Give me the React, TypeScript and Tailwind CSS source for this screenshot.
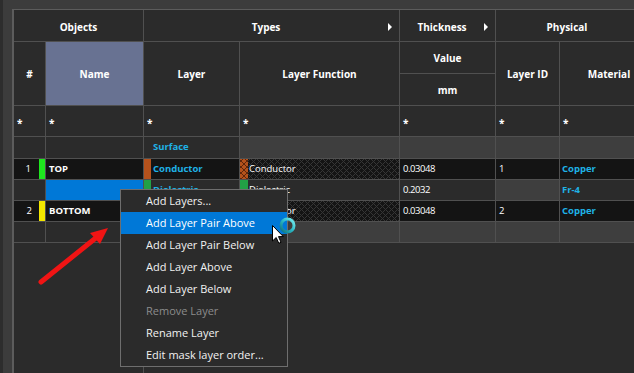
import React from 'react';

const checker =
  'bg-[#141414] bg-[repeating-linear-gradient(45deg,#363636_0px,#363636_1px,transparent_1px,transparent_4.25px),repeating-linear-gradient(-45deg,#363636_0px,#363636_1px,transparent_1px,transparent_4.25px)]';
const orangeChecker =
  'bg-[#b5521c] bg-[repeating-linear-gradient(45deg,#5e260b_0px,#5e260b_1px,transparent_1px,transparent_4.25px),repeating-linear-gradient(-45deg,#5e260b_0px,#5e260b_1px,transparent_1px,transparent_4.25px)]';

function Tri() {
  return <div className="w-0 h-0 border-y-[4px] border-y-transparent border-l-[4px] border-l-white mr-[7px] shrink-0" />;
}

function Hd({ children, className = '' }: { children?: React.ReactNode; className?: string }) {
  return (
    <div className={`flex items-center justify-center text-[10px] font-bold text-white bg-[#2b2b2b] whitespace-nowrap ${className}`}>
      {children}
    </div>
  );
}

function Star() {
  return <div className="bg-[#2b2b2b] flex items-center pl-[3px] pt-[4px] text-[10px] font-bold text-white">*</div>;
}

type CellProps = { children?: React.ReactNode; className?: string };
function C({ children, className = '' }: CellProps) {
  return <div className={`flex items-center min-w-0 overflow-hidden whitespace-nowrap ${className}`}>{children}</div>;
}

const cyan = 'text-[#1fb2e6] font-bold text-[9.5px]';
const num = 'text-white text-[9.5px] tracking-[-0.45px]';

export default function App() {
  const menu = [
    { t: 'Add Layers...' },
    { t: 'Add Layer Pair Above', hl: true },
    { t: 'Add Layer Pair Below' },
    { t: 'Add Layer Above' },
    { t: 'Add Layer Below' },
    { t: 'Remove Layer', dis: true },
    { t: 'Rename Layer' },
    { t: 'Edit mask layer order...' },
  ];
  return (
    <div className="relative w-[634px] h-[373px] overflow-hidden flex font-['Open_Sans','Noto_Sans',sans-serif]">
      <div className="w-[3px] bg-[#2d2d2d] shrink-0" />
      <div className="flex-1 min-w-0 bg-[#3c3c3c] pl-[9px] pt-[9px] flex flex-col">
        <div className="flex-1 min-h-0 flex flex-col bg-[#2b2b2b] border-l-2 border-t border-[#5c5c5c] overflow-hidden">
          <div className="grid grid-cols-[31px_97px_95px_159px_95px_63px_98px] grid-rows-[31px_31px_31px_30px_21px_20px_20px_20px_20px] gap-px bg-[#505050] pb-px w-max shrink-0">
            {/* header row 1 */}
            <Hd className="col-span-2 pt-[3px]">Objects</Hd>
            <Hd className="col-span-2 pt-[3px]">
              <span className="flex-1 text-center">Types</span>
              <Tri />
            </Hd>
            <Hd className="pt-[3px]">
              <span className="flex-1 text-center">Thickness</span>
              <Tri />
            </Hd>
            <Hd className="col-span-2 pt-[3px] pr-[20px]">Physical</Hd>
            {/* header rows 2-3 */}
            <Hd className="row-span-2 pt-[2px]">#</Hd>
            <Hd className="row-span-2 pt-[2px] !bg-[#687292]">Name</Hd>
            <Hd className="row-span-2 pt-[2px]">Layer</Hd>
            <Hd className="row-span-2 pt-[2px]">Layer Function</Hd>
            <Hd className="pt-[2px]">Value</Hd>
            <Hd className="row-span-2 pt-[2px]">Layer ID</Hd>
            <Hd className="row-span-2 pt-[2px]">Material</Hd>
            <Hd className="pt-[2px]">mm</Hd>
            {/* filter row */}
            <Star />
            <Star />
            <Star />
            <Star />
            <Star />
            <Star />
            <Star />
            {/* surface row */}
            <C className="bg-[#2b2b2b]" />
            <C className="bg-[#2b2b2b]" />
            <C className="bg-[#2b2b2b] pl-[9px]">
              <span className={cyan}>Surface</span>
            </C>
            <C className="bg-[#3e3e3e]" />
            <C className="bg-[#3e3e3e]" />
            <C className="bg-[#3e3e3e]" />
            <C className="bg-[#3e3e3e]" />
            {/* TOP row */}
            <C className="bg-[#141414] justify-end">
              <span className="text-white text-[9.5px] pr-[8px]">1</span>
              <div className="w-[6px] self-stretch bg-[#1ee61e]" />
            </C>
            <C className="bg-[#141414] pl-[3px]">
              <span className="text-white font-bold text-[9.5px]">TOP</span>
            </C>
            <C className="bg-[#141414]">
              <div className="w-[7px] self-stretch bg-[#b5521c] shrink-0" />
              <span className={`${cyan} pl-[2px]`}>Conductor</span>
            </C>
            <C className={checker}>
              <div className={`w-[8px] self-stretch shrink-0 ${orangeChecker}`} />
              <span className="text-white text-[9.5px] pl-[1px]">Conductor</span>
            </C>
            <C className="bg-[#141414] pl-[3px]">
              <span className={num}>0.03048</span>
            </C>
            <C className="bg-[#141414] pl-[3px]">
              <span className="text-white text-[9.5px]">1</span>
            </C>
            <C className="bg-[#141414] pl-[2px]">
              <span className={cyan}>Copper</span>
            </C>
            {/* Dielectric row */}
            <C className="bg-[#2b2b2b]" />
            <C className="bg-[#0078d7]" />
            <C className="bg-[#2b2b2b]">
              <div className="w-[7px] self-stretch bg-[#22a046] shrink-0" />
              <span className={`${cyan} pl-[2px]`}>Dielectric</span>
            </C>
            <C className="bg-[#2b2b2b]">
              <div className="w-[8px] self-stretch bg-[#22a046] shrink-0" />
              <span className="text-white text-[9.5px] pl-[1px]">Dielectric</span>
            </C>
            <C className="bg-[#2b2b2b] pl-[3px]">
              <span className={num}>0.2032</span>
            </C>
            <C className="bg-[#3e3e3e]" />
            <C className="bg-[#2b2b2b] pl-[2px]">
              <span className={cyan}>Fr-4</span>
            </C>
            {/* BOTTOM row */}
            <C className="bg-[#141414] justify-end">
              <span className="text-white text-[9.5px] pr-[7px]">2</span>
              <div className="w-[6px] self-stretch bg-[#f2e600]" />
            </C>
            <C className="bg-[#141414] pl-[3px]">
              <span className="text-white font-bold text-[9.5px]">BOTTOM</span>
            </C>
            <C className="bg-[#141414]">
              <div className="w-[7px] self-stretch bg-[#b5521c] shrink-0" />
              <span className={`${cyan} pl-[2px]`}>Conductor</span>
            </C>
            <C className={checker}>
              <div className={`w-[8px] self-stretch shrink-0 ${orangeChecker}`} />
              <span className="text-white text-[9.5px] pl-[1px]">Conductor</span>
            </C>
            <C className="bg-[#141414] pl-[3px]">
              <span className={num}>0.03048</span>
            </C>
            <C className="bg-[#141414] pl-[3px]">
              <span className="text-white text-[9.5px]">2</span>
            </C>
            <C className="bg-[#141414] pl-[2px]">
              <span className={cyan}>Copper</span>
            </C>
            {/* last row */}
            <C className="bg-[#2b2b2b]" />
            <C className="bg-[#2b2b2b]" />
            <C className="bg-[#3e3e3e]" />
            <C className="bg-[#3e3e3e]" />
            <C className="bg-[#3e3e3e]" />
            <C className="bg-[#3e3e3e]" />
            <C className="bg-[#3e3e3e]" />
          </div>
          <div className="flex-1 flex">
            <div className="w-[129px]" />
            <div className="w-px bg-[#505050]" />
          </div>
        </div>
      </div>

      {/* context menu */}
      <div className="absolute left-[120px] top-[189px] w-[168px] h-[178px] border border-[#6e6e6e] bg-[#2b2b2b] flex flex-col">
        {menu.map((m) => (
          <div
            key={m.t}
            className={`h-[22px] shrink-0 flex items-center pl-[25px] text-[11px] ${
              m.hl ? 'bg-[#0078d7] text-white' : m.dis ? 'text-[#8c8c8c]' : 'text-[#f2f2f2]'
            }`}
          >
            {m.t}
          </div>
        ))}
      </div>

      {/* red arrow */}
      <svg className="absolute left-0 top-0 pointer-events-none" width="634" height="373">
        <line x1="41" y1="282" x2="97" y2="237" stroke="#f01414" strokeWidth="5" strokeLinecap="round" />
        <polygon points="108,228 100,244 90,233" fill="#f01414" />
      </svg>

      {/* cursor + busy ring */}
      <svg className="absolute left-[268px] top-[215px] pointer-events-none" width="30" height="32" viewBox="0 0 30 32">
        <defs>
          <linearGradient id="ring" x1="0" y1="1" x2="1" y2="0">
            <stop offset="0" stopColor="#0f6f7a" />
            <stop offset="0.5" stopColor="#2bb7c4" />
            <stop offset="1" stopColor="#7af0f2" />
          </linearGradient>
        </defs>
        <circle cx="19.5" cy="10.5" r="6.5" fill="none" stroke="url(#ring)" strokeWidth="3" />
        <path d="M4.5 10.5 V26 L8.2 22.5 L10.8 28.3 L13 27.3 L10.5 21.6 H15.3 Z" fill="#ffffff" stroke="#000000" strokeWidth="1" strokeLinejoin="round" />
      </svg>
    </div>
  );
}
